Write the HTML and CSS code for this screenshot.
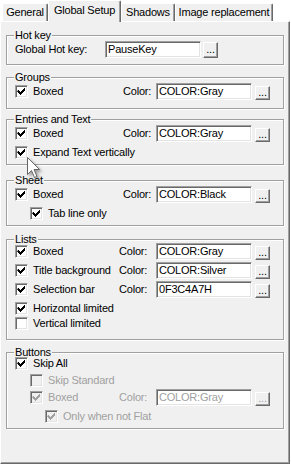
FILE: index.html
```html
<!DOCTYPE html>
<html lang="en">
<head>
    <meta charset="UTF-8">
    <meta name="viewport" content="width=device-width, initial-scale=1.0">
    <title>Global Setup</title>
    <link rel="stylesheet" href="styles.css">
</head>
<body>
    <svg class="defs" width="0" height="0">
        <symbol id="tick" viewBox="0 0 13 13">
            <path d="M3 5h1v1h1v1h1v-1h1v-1h1v-1h1v-1h1v3h-1v1h-1v1h-1v1h-1v1h-1v-1h-1v-1h-1v-1h-1z"/>
        </symbol>
    </svg>

    <div class="tabs">
        <div class="tab tab-general">General</div>
        <div class="tab tab-global active">Global Setup</div>
        <div class="tab tab-shadows">Shadows</div>
        <div class="tab tab-image">Image replacement</div>
    </div>

    <div class="panel">
        <div class="group group-hotkey">
            <div class="group-title">Hot key</div>
            <div class="row row-hotkey">
                <span>Global Hot key:</span>
                <div class="edit">PauseKey</div>
                <div class="dots dots-tall">...</div>
            </div>
        </div>

        <div class="group group-groups">
            <div class="group-title">Groups</div>
            <div class="row">
                <label class="check"><span class="box"><svg><use href="#tick"/></svg></span>Boxed</label>
                <span class="color-label">Color:</span>
                <div class="edit">COLOR:Gray</div>
                <div class="dots">...</div>
            </div>
        </div>

        <div class="group group-entries">
            <div class="group-title">Entries and Text</div>
            <div class="row">
                <label class="check"><span class="box"><svg><use href="#tick"/></svg></span>Boxed</label>
                <span class="color-label">Color:</span>
                <div class="edit">COLOR:Gray</div>
                <div class="dots">...</div>
            </div>
            <div class="row">
                <label class="check"><span class="box"><svg><use href="#tick"/></svg></span>Expand Text vertically</label>
            </div>
        </div>

        <div class="group group-sheet">
            <div class="group-title">Sheet</div>
            <div class="row">
                <label class="check"><span class="box"><svg><use href="#tick"/></svg></span>Boxed</label>
                <span class="color-label">Color:</span>
                <div class="edit">COLOR:Black</div>
                <div class="dots">...</div>
            </div>
            <div class="row">
                <label class="check indent"><span class="box"><svg><use href="#tick"/></svg></span>Tab line only</label>
            </div>
        </div>

        <div class="group group-lists">
            <div class="group-title">Lists</div>
            <div class="row">
                <label class="check"><span class="box"><svg><use href="#tick"/></svg></span>Boxed</label>
                <span class="color-label">Color:</span>
                <div class="edit">COLOR:Gray</div>
                <div class="dots">...</div>
            </div>
            <div class="row">
                <label class="check"><span class="box"><svg><use href="#tick"/></svg></span>Title background</label>
                <span class="color-label">Color:</span>
                <div class="edit">COLOR:Silver</div>
                <div class="dots">...</div>
            </div>
            <div class="row">
                <label class="check"><span class="box"><svg><use href="#tick"/></svg></span>Selection bar</label>
                <span class="color-label">Color:</span>
                <div class="edit">0F3C4A7H</div>
                <div class="dots">...</div>
            </div>
            <div class="row">
                <label class="check"><span class="box"><svg><use href="#tick"/></svg></span>Horizontal limited</label>
            </div>
            <div class="row row-close">
                <label class="check"><span class="box"></span>Vertical limited</label>
            </div>
        </div>

        <div class="group group-buttons">
            <div class="group-title">Buttons</div>
            <div class="row">
                <label class="check"><span class="box"><svg><use href="#tick"/></svg></span>Skip All</label>
            </div>
            <div class="row row-tight">
                <label class="check indent disabled"><span class="box"></span>Skip Standard</label>
            </div>
            <div class="row row-tight disabled">
                <label class="check indent disabled"><span class="box"><svg><use href="#tick"/></svg></span>Boxed</label>
                <span class="color-label">Color:</span>
                <div class="edit">COLOR:Gray</div>
                <div class="dots">...</div>
            </div>
            <div class="row">
                <label class="check indent-2 disabled"><span class="box"><svg><use href="#tick"/></svg></span>Only when not Flat</label>
            </div>
        </div>
    </div>

    <svg class="cursor" width="20" height="26" viewBox="0 0 20 26">
        <path d="M1.5 1.5V18.5L5.5 14.5L8.5 21.5L11 20.5L8 13.5H13.5Z" fill="#fff" stroke="#666" stroke-width="1" stroke-linejoin="round"/>
    </svg>
</body>
</html>
```

FILE: styles.css
```css
body {
    margin: 0;
    background-color: #fff;
    font-family: "Liberation Sans", Arial, sans-serif;
    font-size: 11px;
    letter-spacing: -0.2px;
    line-height: 13px;
    color: #000;
    position: relative;
}
.defs {
    position: absolute;
}

/* tab strip */
.tabs {
    display: flex;
    align-items: flex-end;
    height: 21px;
    padding-left: 2px;
}
.tab {
    box-sizing: border-box;
    height: 18px;
    padding-top: 2px;
    background-color: #f0f0f0;
    border-top: 1px solid #fff;
    border-left: 1px solid #fff;
    border-right: 1px solid #696969;
    border-radius: 2px 2px 0 0;
    box-shadow: inset -1px 0 0 #a0a0a0;
    text-align: center;
    white-space: nowrap;
}
.tab.active {
    height: 22px;
    margin-bottom: -1px;
    padding-top: 3px;
    position: relative;
    z-index: 1;
}
.tab-general { width: 46px; }
.tab-global { width: 73px; }
.tab-shadows { width: 54px; }
.tab-image { width: 98px; }

.panel {
    box-sizing: border-box;
    width: 290px;
    height: 443px;
    padding-top: 13px;
    background-color: #f0f0f0;
    border-top: 1px solid #fff;
    border-left: 1px solid #fff;
    border-right: 1px solid #696969;
    border-bottom: 1px solid #696969;
    box-shadow: inset -1px -1px 0 #a0a0a0;
}

/* group boxes */
.group {
    margin: 0 5px;
    padding-left: 8px;
    border: 1px solid #a0a0a0;
    box-shadow: inset 1px 1px 0 #fff, 1px 1px 0 #fff;
}
.group-title {
    width: fit-content;
    margin: -7px 0 0 -1px;
    padding: 0 1px;
    background-color: #f0f0f0;
}
.group-hotkey { padding-bottom: 6px; }
.group-groups { margin-top: 12px; padding-bottom: 8px; }
.group-entries { margin-top: 10px; padding-bottom: 3px; }
.group-sheet { margin-top: 15px; padding-bottom: 3px; }
.group-lists { margin-top: 13px; padding-bottom: 7px; }
.group-buttons { margin-top: 12px; padding-bottom: 3px; }

.row {
    display: grid;
    grid-template-columns: 108px 33px 96px 18px;
    align-items: center;
    height: 17px;
    margin-top: 2px;
    white-space: nowrap;
}
.row:nth-child(2) { margin-top: -1px; }
.group-lists .row:nth-child(2) { margin-top: -3px; }
.group-buttons .row:nth-child(2) { margin-top: -4px; }
.group-lists .row,
.group-buttons .row {
    grid-template-columns: 104px 37px 96px 18px;
}
.row-hotkey {
    grid-template-columns: 90px 96px 17px;
}
.row-tight { margin-top: 0; }
.row-close { margin-top: -2px; }

/* checkboxes */
.check {
    display: flex;
    align-items: center;
}
.check.indent { padding-left: 15px; }
.check.indent-2 { padding-left: 30px; }
.box {
    box-sizing: border-box;
    flex: none;
    width: 13px;
    height: 13px;
    margin-right: 5px;
    background-color: #fff;
    border: 1px solid;
    border-color: #a0a0a0 #fff #fff #a0a0a0;
    box-shadow: inset 1px 1px 0 #696969, inset -1px -1px 0 #e3e3e3;
}
.box svg {
    display: block;
    width: 13px;
    height: 13px;
    margin: -1px;
    fill: #000;
}
.disabled { color: #a0a0a0; }
.disabled .box { background-color: #f0f0f0; }
.disabled .box svg { fill: #a0a0a0; }

/* edits and ellipsis buttons */
.edit {
    box-sizing: border-box;
    height: 17px;
    padding-left: 2px;
    line-height: 15px;
    background-color: #fff;
    border: 1px solid;
    border-color: #a0a0a0 #fff #fff #a0a0a0;
    box-shadow: inset 1px 1px 0 #696969, inset -1px -1px 0 #e3e3e3;
    overflow: hidden;
}
.dots {
    box-sizing: border-box;
    justify-self: end;
    align-self: end;
    width: 15px;
    height: 14px;
    line-height: 11px;
    text-align: center;
    background-color: #f0f0f0;
    border-top: 1px solid #fff;
    border-left: 1px solid #fff;
    border-right: 1px solid #696969;
    border-bottom: 1px solid #696969;
    box-shadow: inset -1px -1px 0 #a0a0a0;
}
.dots-tall {
    height: 16px;
    line-height: 13px;
}

.cursor {
    position: absolute;
    left: 26px;
    top: 156px;
    filter: drop-shadow(2px 2px 1.5px rgba(0, 0, 0, 0.35));
}
```
